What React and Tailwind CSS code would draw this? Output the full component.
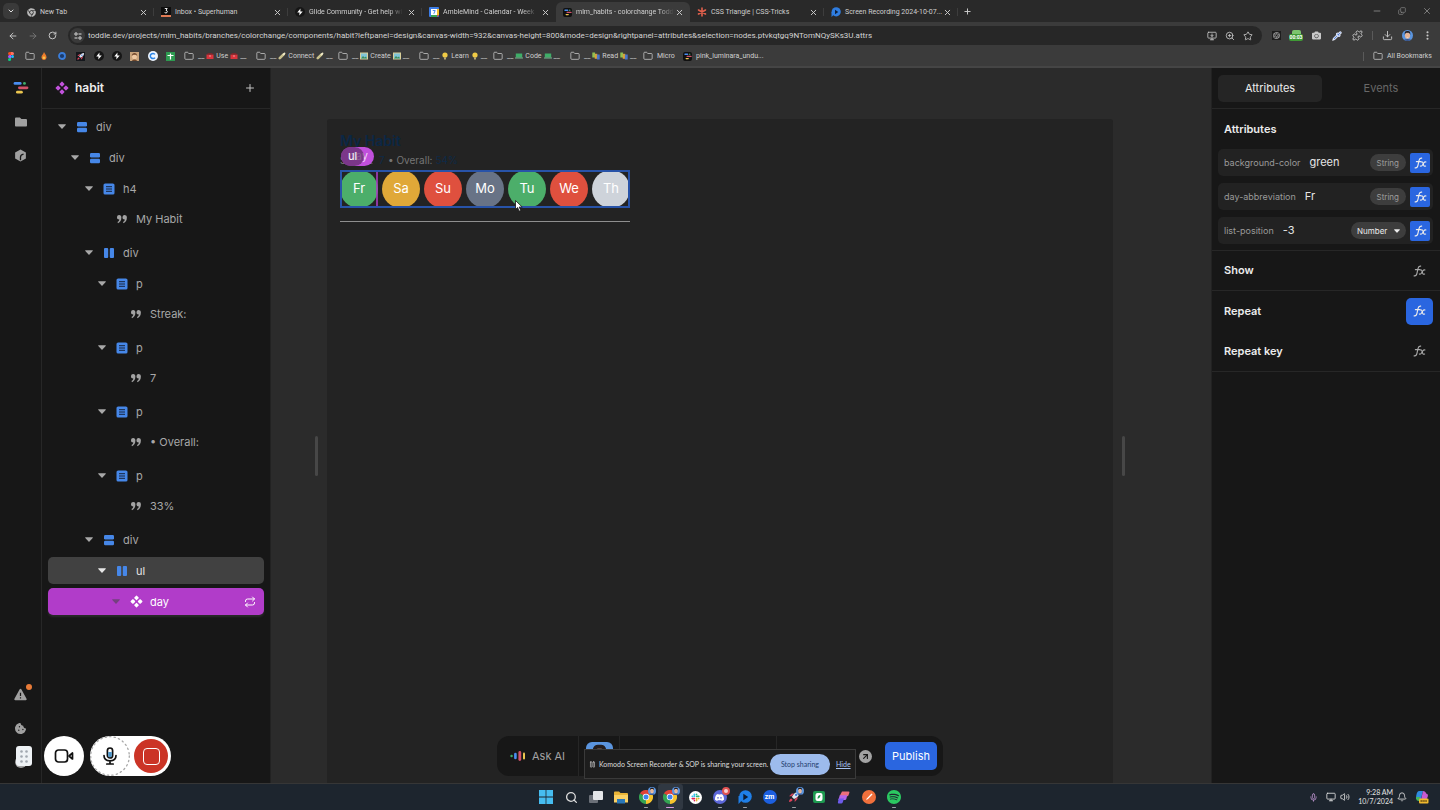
import React from "react";
import {
  ArrowLeft, ArrowRight, Bell, ChevronDown, Copy, Download, EllipsisVertical, Folder, Minus,
  MonitorDown, Pause, Pipette, Plus, Puzzle, Repeat, RotateCw, Search, Star, Volume2, X, ZoomIn,
  ArrowUpRight, Mic, Monitor,
} from "lucide-react";
import { SiDiscord, SiSpotify, SiOpenai } from "react-icons/si";
import { FaCamera, FaChrome, FaCookieBite, FaFolder } from "react-icons/fa";

/* ---------- small drawings ---------- */

function ToddleMark({ className }) {
  return (
    <svg className={className} viewBox="0 0 16 14" fill="none" strokeLinecap="round" strokeWidth="2.8">
      <path d="M2 2.4h5.2" stroke="#4a8df0" />
      <path d="M11.4 2.4h.1" stroke="#3fae6a" />
      <path d="M6.4 6.8h7.6" stroke="#d2526a" />
      <path d="M4.4 11.2h4" stroke="#ecc64f" />
    </svg>
  );
}

function ToddleFavicon() {
  return (
    <span className="flex size-[9px] shrink-0 items-center justify-center rounded-[2px] bg-[#101010]">
      <ToddleMark className="h-[7px] w-[8px]" />
    </span>
  );
}

function GlideIcon() {
  return (
    <svg className="size-[10px] shrink-0" viewBox="0 0 20 20">
      <circle cx="10" cy="10" r="10" fill="#161616" />
      <path d="M11 3 4.5 11h4.6L8.5 17l7-8h-4.8z" fill="#fff" />
    </svg>
  );
}

function FigmaIcon() {
  return (
    <svg className="h-[9px] w-[6px] shrink-0" viewBox="0 0 12 18">
      <path d="M3 0h3v6H3a3 3 0 0 1 0-6z" fill="#f24e1e" />
      <path d="M6 0h3a3 3 0 0 1 0 6H6z" fill="#ff7262" />
      <path d="M3 6h3v6H3a3 3 0 0 1 0-6z" fill="#a259ff" />
      <circle cx="9" cy="9" r="3" fill="#1abcfe" />
      <path d="M3 12h3v3a3 3 0 1 1-3-3z" fill="#0acf83" />
    </svg>
  );
}

function Fx({ className }) {
  return (
    <svg className={className} viewBox="0 0 24 22" fill="none" stroke="currentColor" strokeWidth="2.1" strokeLinecap="round" strokeLinejoin="round">
      <path d="M2 20c3.500.7 4.600-1.200 5.300-4.600l1.900-8.800C9.900 3.300 11 1.400 14.200 2" />
      <path d="M4.400 8.400h8" />
      <path d="M13.500 9.200c2-.8 2.700.2 3.300 2.400l.8 3c.5 2 1.600 3 3.800 1.900" />
      <path d="M22 9.200c-1.500-.9-2.500-.2-3.600 1.200l-2.600 4.200c-1 1.600-2.200 2.700-4 1.900" />
    </svg>
  );
}

function Diamonds({ className }) {
  return (
    <svg className={className} viewBox="0 0 24 24" fill="currentColor">
      <rect x="8.700" y="2" width="6.600" height="6.600" rx="1" transform="rotate(45 12 5.300)" />
      <rect x="8.700" y="15.400" width="6.600" height="6.600" rx="1" transform="rotate(45 12 18.700)" />
      <rect x="2" y="8.700" width="6.600" height="6.600" rx="1" transform="rotate(45 5.300 12)" />
      <rect x="15.400" y="8.700" width="6.600" height="6.600" rx="1" transform="rotate(45 18.700 12)" />
    </svg>
  );
}

function NodeIcon({ kind }) {
  if (kind === "rows")
    return (
      <svg className="size-3" viewBox="0 0 12 12" fill="#4687e8">
        <rect x="1" y="1" width="10" height="4.400" rx="1.200" />
        <rect x="1" y="6.800" width="10" height="4.400" rx="1.200" />
      </svg>
    );
  if (kind === "cols")
    return (
      <svg className="size-3" viewBox="0 0 12 12" fill="#4687e8">
        <rect x="1" y="1" width="4.200" height="10" rx="1" />
        <rect x="6.800" y="1" width="4.200" height="10" rx="1" />
      </svg>
    );
  if (kind === "text")
    return (
      <svg className="size-3" viewBox="0 0 12 12">
        <rect x="0.500" y="0.500" width="11" height="11" rx="1.600" fill="#4687e8" />
        <path d="M3 3.700h6M3 6h6M3 8.300h6" stroke="#16243c" strokeWidth="1" />
      </svg>
    );
  if (kind === "quote")
    return (
      <svg className="size-3" viewBox="0 0 12 12" fill="#a3a3a3">
        <path d="M1 4a2.100 2.100 0 1 1 4.400.3C5.400 7.500 4.200 9.300 2 10.200l-.5-1.100c1.100-.6 1.700-1.400 1.800-2.600A2.300 2.300 0 0 1 1 4z" />
        <path d="M6.500 4a2.100 2.100 0 1 1 4.400.3c0 3.200-1.200 5-3.400 5.900L7 9.100c1.100-.6 1.700-1.400 1.800-2.600A2.300 2.300 0 0 1 6.500 4z" />
      </svg>
    );
  return <Diamonds className="size-[13px] text-white" />;
}

function Caret({ className }) {
  return (
    <svg className={className} viewBox="0 0 8 5" fill="currentColor">
      <path d="M.7.200h6.600c.5 0 .7.500.4.800L4.500 4.500c-.3.300-.7.300-1 0L.3 1C0 .7.200.200.700.200z" />
    </svg>
  );
}

function Face({ className }) {
  return (
    <svg className={className} viewBox="0 0 20 20">
      <rect width="20" height="20" fill="#5b95df" />
      <path d="M2 20c1-5 15-5 16 0z" fill="#39558c" />
      <ellipse cx="10" cy="10" rx="4.600" ry="6" fill="#e6b598" />
      <path d="M5 9c-.6-6 1.500-7 5-7s5.600 1 5 7c-.8-3-1.500-4-5-4s-4.200 1-5 4z" fill="#231d1e" />
      <path d="M8 13c1 1.200 3 1.200 4 0z" fill="#fff" />
    </svg>
  );
}

function ChromeBall({ className }) {
  return (
    <svg className={className} viewBox="0 0 24 24">
      <path d="M12 12 1.600 6A12 12 0 0 1 22.400 6z" fill="#e04236" />
      <path d="M12 12 22.400 6A12 12 0 0 1 12 24z" fill="#f7c52d" />
      <path d="M12 12v12A12 12 0 0 1 1.600 6z" fill="#34a352" />
      <circle cx="12" cy="12" r="5.600" fill="#fff" />
      <circle cx="12" cy="12" r="4.300" fill="#3f83ee" />
    </svg>
  );
}

function RocketDrawing({ className }) {
  return (
    <svg className={className} viewBox="0 0 20 20">
      <path d="M18 2c-5 0-9 3-11 8l3 3c5-2 8-6 8-11z" fill="#dfe4ee" />
      <path d="M7 9H3l4-4h3zM11 13v4l4-4v-3z" fill="#d6455b" />
      <circle cx="13" cy="7" r="1.600" fill="#3b78d8" />
      <path d="M6 12c-2 .5-3 2.500-3 5 2.500 0 4.500-1 5-3z" fill="#e2445c" />
    </svg>
  );
}

/* ---------- browser chrome ---------- */

const TABS = [
  { title: "New Tab", icon: <FaChrome className="size-[9px] shrink-0 text-[#b9b9b9]" /> },
  {
    title: "Inbox • Superhuman",
    icon: (
      <svg className="size-[10px] shrink-0" viewBox="0 0 10 10">
        <rect width="10" height="10" fill="#0d0d0d" />
        <rect y="8" width="10" height="2" fill="#e07a54" />
        <path d="M3.800 1.500h2.400L5 3.300c1.800.1 1.700 2.700-.1 2.700-.7 0-1.100-.3-1.300-.8" fill="none" stroke="#fff" strokeWidth=".9" />
      </svg>
    ),
  },
  { title: "Glide Community - Get help wi", icon: <GlideIcon />, fade: true },
  {
    title: "AmbleMind - Calendar - Week",
    icon: (
      <svg className="size-[10px] shrink-0" viewBox="0 0 10 10">
        <rect width="10" height="10" rx="1" fill="#3c7de6" />
        <path d="M8 2h2v6H8z" fill="#f5bd2c" />
        <path d="M2 8h6v2H2z" fill="#37a454" />
        <path d="M8 8h2L8 10z" fill="#e24939" />
        <rect x="2" y="2" width="6" height="6" fill="#fff" />
        <path d="M3.700 3.500h2.500L4.800 6.800" fill="none" stroke="#3c7de6" strokeWidth=".9" />
      </svg>
    ),
    fade: true,
  },
  { title: "mlm_habits - colorchange Todd", icon: <ToddleFavicon />, fade: true, active: true },
  {
    title: "CSS Triangle | CSS-Tricks",
    icon: (
      <svg className="size-[10px] shrink-0" viewBox="0 0 10 10" stroke="#e2604c" strokeWidth="1.600" strokeLinecap="round">
        <path d="M5 1v8M1.500 3l7 4M8.500 3l-7 4" />
      </svg>
    ),
  },
  {
    title: "Screen Recording 2024-10-07...",
    icon: (
      <svg className="size-[10px] shrink-0" viewBox="0 0 10 10">
        <circle cx="5.200" cy="4.800" r="4.600" fill="#2f7de0" />
        <path d="M.5 10V5h5z" fill="#2f7de0" />
        <path d="M4 2.800 7.300 5 4 7.200z" fill="#0d1f3b" />
      </svg>
    ),
  },
];

function TabStrip() {
  return (
    <div className="flex h-[22px] items-center bg-[#292929] pl-[3px]">
      <button aria-label="Search tabs" className="flex size-4 items-center justify-center rounded-[5px] bg-[#3a3a3a] text-[#ddd]">
        <ChevronDown className="size-2" strokeWidth={3} />
      </button>
      <div role="tablist" className="flex h-full items-center pl-px">
        {TABS.map((t, i) => (
          <div
            key={t.title}
            className={
              t.active
                ? "flex h-5 w-[134px] items-center self-end rounded-t-md bg-[#3b3b3b] pl-[7px]"
                : "flex h-5 w-[134px] items-center self-end pl-[7px]"
            }
          >
            <button role="tab" aria-selected={!!t.active} className="flex min-w-0 flex-1 items-center gap-1">
              {t.icon}
              <span
                className={
                  t.fade
                    ? "flex-1 mask-r-from-85% text-left whitespace-nowrap"
                    : "flex-1 text-left whitespace-nowrap"
                }
              >
                {t.title}
              </span>
            </button>
            <button aria-label={"Close " + t.title} className="ml-[2px] flex w-3 justify-center">
              <X className="size-[9px]" strokeWidth={2.5} />
            </button>
            <span className={i === 3 || i === 4 ? "ml-[4px] w-px" : "ml-[4px] h-2 w-px bg-[#3d3d3d]"} />
          </div>
        ))}
      </div>
      <button aria-label="New tab" className="ml-px flex size-4 items-center justify-center">
        <Plus className="size-[9px]" strokeWidth={2.5} />
      </button>
      <div className="ml-auto flex items-center gap-4 pr-2 text-[#8c8c8c]">
        <button aria-label="Minimize"><Minus className="size-[10px]" /></button>
        <button aria-label="Restore"><Copy className="size-2 -scale-x-100 rotate-180" /></button>
        <button aria-label="Close window"><X className="size-[10px]" /></button>
      </div>
    </div>
  );
}

function AddressBar() {
  return (
    <div className="flex h-6 items-center pt-[3px] text-[#c9c9c9]">
      <div className="flex w-[68px] items-center gap-[10px] pl-2">
        <button aria-label="Back"><ArrowLeft className="size-[10px]" strokeWidth={2.200} /></button>
        <button aria-label="Forward"><ArrowRight className="size-[10px] text-[#777]" strokeWidth={2.200} /></button>
        <button aria-label="Reload"><RotateCw className="size-[9px]" strokeWidth={2.600} /></button>
      </div>
      <div className="flex h-[19px] flex-1 items-center rounded-full bg-[#272727] pr-[9px] pl-[2px]">
        <button aria-label="Site information" className="flex size-[15px] items-center justify-center rounded-full bg-[#3a3a3a]">
          <svg className="size-2" viewBox="0 0 8 8" fill="none" stroke="#ddd" strokeWidth="1">
            <path d="M4.500 2h3M.5 6h3" />
            <circle cx="2" cy="2" r="1.200" />
            <circle cx="6" cy="6" r="1.200" />
          </svg>
        </button>
        <input
          aria-label="Address"
          className="ml-[3px] min-w-0 flex-1 bg-transparent text-[8px] text-[#d4d4d4] outline-none"
          defaultValue="toddle.dev/projects/mlm_habits/branches/colorchange/components/habit?leftpanel=design&canvas-width=932&canvas-height=800&mode=design&rightpanel=attributes&selection=nodes.ptvkqtgq9NTomNQySKs3U.attrs"
        />
        <div className="flex items-center gap-2">
          <button aria-label="Install app"><MonitorDown className="size-[10px]" /></button>
          <button aria-label="Zoom"><ZoomIn className="size-[10px]" /></button>
          <button aria-label="Bookmark"><Star className="size-[10px]" /></button>
        </div>
      </div>
      <div className="flex items-center pl-1">
        <button aria-label="Assistant" className="flex w-5 justify-center">
          <span className="flex size-[9px] items-center justify-center bg-[#1d1d1d]"><SiOpenai className="size-[7px]" /></span>
        </button>
        <button aria-label="Recording time" className="flex w-5 flex-col items-center">
          <span className="h-1 w-[9px] rounded-t-[2px] bg-[#7cc46d]" />
          <span className="rounded-[2px] bg-[#3f9a35] px-[1px] text-[5px] leading-[7px] font-bold text-white">00:03</span>
        </button>
        <button aria-label="Screenshot" className="flex w-[21px] justify-center"><FaCamera className="size-[9px]" /></button>
        <button aria-label="Color picker" className="flex w-5 justify-center"><Pipette className="size-[10px] fill-[#4d7bd8] text-[#e9eefb]" strokeWidth={2.500} /></button>
        <button aria-label="Extensions" className="flex w-[21px] justify-center"><Puzzle className="size-[11px]" /></button>
        <span className="mx-[4px] h-[9px] w-px bg-[#5a5a5a]" />
        <button aria-label="Downloads" className="flex w-5 justify-center"><Download className="size-[11px]" /></button>
        <button aria-label="Profile" className="flex w-5 justify-center"><Face className="size-[11px] rounded-full" /></button>
        <button aria-label="Menu" className="flex w-5 justify-center"><EllipsisVertical className="size-[11px]" strokeWidth={2.500} /></button>
        <span className="w-[3px]" />
      </div>
    </div>
  );
}

function Emoji({ kind }) {
  if (kind === "box")
    return (
      <svg className="size-2 shrink-0" viewBox="0 0 8 8">
        <path d="M.5 2.500h7V7h-7z" fill="#d8343c" />
        <path d="M.5 2.500 2 1.200h4l1.500 1.300z" fill="#8f2228" />
        <path d="M3 4h2" stroke="#f1b6b6" strokeWidth=".8" />
      </svg>
    );
  if (kind === "plug")
    return (
      <svg className="size-2 shrink-0" viewBox="0 0 8 8" strokeLinecap="round">
        <path d="M1.800 6.200 5.600 2.400" stroke="#c8c08d" strokeWidth="2.600" />
        <path d="M5.400 2.600 6.600 1.400" stroke="#efe9c8" strokeWidth="1.600" />
      </svg>
    );
  if (kind === "picture")
    return (
      <svg className="size-2 shrink-0" viewBox="0 0 8 8">
        <rect y=".5" width="8" height="7" fill="#d9cf9a" />
        <rect x="1" y="1.500" width="6" height="5" fill="#7fc4d8" />
        <path d="M1 6.500 3 4l1.500 1.500L6 4.500l1 2z" fill="#3b8d5c" />
      </svg>
    );
  if (kind === "bulb")
    return (
      <svg className="size-2 shrink-0" viewBox="0 0 8 8">
        <circle cx="4" cy="3" r="2.600" fill="#f0cb45" />
        <rect x="3" y="5.300" width="2" height="2.200" fill="#b8aa74" />
      </svg>
    );
  if (kind === "laptop")
    return (
      <svg className="size-2 shrink-0" viewBox="0 0 8 8">
        <rect x=".8" y="1.500" width="6.400" height="4" fill="#3fae68" />
        <rect y="5.500" width="8" height="1" fill="#7bb591" />
      </svg>
    );
  return (
    <svg className="size-2 shrink-0" viewBox="0 0 8 8">
      <rect x=".3" y=".5" width="2.800" height="5" fill="#8fc152" />
      <rect x="2.700" y="1.800" width="2.600" height="5" fill="#d8a13c" />
      <rect x="4.900" y="2.500" width="2.800" height="5" fill="#4a74c8" />
    </svg>
  );
}

const FOLDERS = [
  { title: "Use", kind: "box", width: "w-[72px]" },
  { title: "Connect", kind: "plug", width: "w-[82px]" },
  { title: "Create", kind: "picture", width: "w-[81px]" },
  { title: "Learn", kind: "bulb", width: "w-[74px]" },
  { title: "Code", kind: "laptop", width: "w-[77px]" },
  { title: "Read", kind: "books", width: "w-[73px]" },
];

function Bookmarks() {
  return (
    <div className="flex h-5 items-center overflow-hidden pl-[8px] text-[7px] whitespace-nowrap text-[#cfcfcf]">
      <div className="flex w-[176px] shrink-0 items-center">
        <a href="#" aria-label="Figma" className="flex w-[17px]"><FigmaIcon /></a>
        <a href="#" aria-label="Flame" className="flex w-[33px] items-center gap-[5px]">
          <Folder className="size-[10px]" strokeWidth={1.800} />
          <svg className="size-2" viewBox="0 0 8 8">
            <path d="M4 0c.3 1.500 2.500 2.600 2.500 5A2.500 2.700 0 0 1 4 8a2.500 2.700 0 0 1-2.500-3C1.500 3.500 3.500 2 4 0z" fill="#ee7c2b" />
            <circle cx="4" cy="5.800" r="1.300" fill="#f8c64e" />
          </svg>
        </a>
        <a href="#" aria-label="Ring" className="flex w-[18px]">
          <svg className="size-2" viewBox="0 0 8 8">
            <circle cx="4" cy="4" r="3" fill="#1c3b6b" stroke="#3a7edb" strokeWidth="1.800" />
          </svg>
        </a>
        <a href="#" aria-label="Rocket" className="flex w-[18px]">
          <span className="bg-[#14171c]"><RocketDrawing className="size-[9px]" /></span>
        </a>
        <a href="#" aria-label="Glide" className="flex w-[18px]"><GlideIcon /></a>
        <a href="#" aria-label="Glide docs" className="flex w-[18px]"><GlideIcon /></a>
        <a href="#" aria-label="Portrait" className="flex w-[18px]">
          <svg className="size-[9px]" viewBox="0 0 9 9">
            <rect width="9" height="9" fill="#c9a47c" />
            <ellipse cx="4.500" cy="4.500" rx="2.400" ry="3" fill="#efc9a2" />
            <path d="M1.800 4c0-4 5.400-4 5.400 0C6 2.400 3 2.400 1.800 4zM2 9c.5-2 4.500-2 5 0z" fill="#6d4429" />
          </svg>
        </a>
        <a href="#" aria-label="Calendar app" className="flex w-[18px]">
          <svg className="size-[10px]" viewBox="0 0 10 10">
            <circle cx="5" cy="5" r="5" fill="#eef5ff" />
            <path d="M7 3.400A2.600 2.600 0 1 0 7 6.600" fill="none" stroke="#2c86e8" strokeWidth="1.500" />
          </svg>
        </a>
        <a href="#" aria-label="Sheet" className="flex">
          <svg className="size-[9px]" viewBox="0 0 9 9">
            <rect width="9" height="9" fill="#2d9a50" />
            <path d="M1.500 3.500h6M4.500 1.500v6" stroke="#fff" strokeWidth="1.200" />
          </svg>
        </a>
      </div>
      {FOLDERS.map((f) => (
        <a key={f.title} href="#" className={f.width + " flex shrink-0 items-center gap-[2px]"}>
          <Folder className="size-[10px] shrink-0" strokeWidth={1.800} />
          <span className="pl-[2px]">__</span>
          <Emoji kind={f.kind} />
          <span>{f.title}</span>
          <Emoji kind={f.kind} />
          <span>__</span>
        </a>
      ))}
      <a href="#" className="flex w-[40px] shrink-0 items-center gap-1">
        <Folder className="size-[10px] shrink-0" strokeWidth={1.800} />
        Micro
      </a>
      <a href="#" className="flex shrink-0 items-center gap-1">
        <ToddleFavicon />
        pink_luminara_undu...
      </a>
      <div className="ml-auto flex shrink-0 items-center pr-2">
        <span className="mr-[9px] h-[9px] w-px bg-[#5a5a5a]" />
        <a href="#" className="flex items-center gap-1">
          <Folder className="size-[10px]" strokeWidth={1.800} />
          All Bookmarks
        </a>
      </div>
    </div>
  );
}

/* ---------- editor: left ---------- */

function Rail() {
  return (
    <nav aria-label="Project" className="relative flex w-[42px] shrink-0 flex-col items-center border-r border-[#272727] bg-[#171717] pt-[13px] text-[#a0a0a0]">
      <button aria-label="Home"><ToddleMark className="h-[14px] w-4" /></button>
      <button aria-label="Files" className="mt-[21px]"><FaFolder className="size-3" /></button>
      <button aria-label="Packages" className="mt-[21px]">
        <svg className="size-[13px]" viewBox="0 0 14 14">
          <path d="M7 0.500 12.800 3.700v6.600L7 13.500 1.200 10.300V3.700z" fill="currentColor" />
          <path d="M7 12V8.500c0-1.500 1-2.600 3.300-3" stroke="#171717" strokeWidth="1.400" fill="none" />
        </svg>
      </button>
      <div className="mt-auto flex flex-col items-center gap-[22px] pb-[15px]">
        <button aria-label="Issues" className="relative">
          <svg className="size-[13px]" viewBox="0 0 14 14">
            <path d="M7 .8c.4 0 .7.2.9.6l5.600 10.200c.4.800 0 1.600-.9 1.600H1.400c-.9 0-1.300-.8-.9-1.600L6.100 1.400c.2-.4.500-.6.900-.6z" fill="currentColor" />
            <path d="M7 5v3.600M7 10v1.300" stroke="#171717" strokeWidth="1.300" />
          </svg>
          <span className="absolute -top-1 -right-[5px] size-[6px] rounded-full bg-[#e87b38]" />
        </button>
        <button aria-label="Cookies"><FaCookieBite className="size-[11px]" /></button>
        <button aria-label="Help" className="size-3 rounded-full bg-[#a0a0a0]" />
      </div>
    </nav>
  );
}

const INDENT = ["pl-[9px]", "pl-[22px]", "pl-[36px]", "pl-[49px]", "pl-[63px]"];

const NODES = [
  { level: 0, kind: "rows", label: "div" },
  { level: 1, kind: "rows", label: "div" },
  { level: 2, kind: "text", label: "h4" },
  { level: 3, kind: "quote", label: "My Habit" },
  { level: 2, kind: "cols", label: "div" },
  { level: 3, kind: "text", label: "p" },
  { level: 4, kind: "quote", label: "Streak:" },
  { level: 3, kind: "text", label: "p" },
  { level: 4, kind: "quote", label: "7" },
  { level: 3, kind: "text", label: "p" },
  { level: 4, kind: "quote", label: "• Overall:" },
  { level: 3, kind: "text", label: "p" },
  { level: 4, kind: "quote", label: "33%" },
  { level: 2, kind: "rows", label: "div" },
  { level: 3, kind: "cols", label: "ul", tone: "hover" },
  { level: 4, kind: "component", label: "day", tone: "selected" },
];

const ROW_TONE = {
  plain: "flex h-[27px] w-full items-center rounded-[5px] text-[#a8a8a8] ",
  quote: "mb-1 flex h-[25px] w-full items-center rounded-[5px] text-[#a8a8a8] ",
  hover: "flex h-[27px] w-full items-center rounded-[5px] bg-[#414141] text-[#e6e6e6] ",
  selected: "flex h-[27px] w-full items-center rounded-[5px] bg-[#b13cc9] text-white shadow-[0_2px_2px_#2a2a2a] ",
};

function Tree() {
  return (
    <aside className="flex w-[229px] shrink-0 flex-col border-r border-[#222] bg-[#171717]">
      <header className="flex h-[41px] items-center border-b border-[#272727] pr-[14px] pl-[13px]">
        <Diamonds className="size-[14px] text-[#c252dc]" />
        <h1 className="ml-[6px] text-[12px] font-semibold text-[#ececec]">habit</h1>
        <button aria-label="Add element" className="ml-auto text-[#c4c4c4]">
          <Plus className="size-3" strokeWidth={2} />
        </button>
      </header>
      <div className="flex flex-col gap-1 pt-1 pr-[6px] pl-[6px]">
        {NODES.map((n, i) => (
          <button key={i} className={ROW_TONE[n.tone || (n.kind === "quote" ? "quote" : "plain")] + INDENT[n.level]}>
            <span className="flex w-[19px] shrink-0 items-center pl-[1px]">
              {n.kind !== "quote" && (
                <Caret className={n.tone === "selected" ? "h-[5px] w-2 text-[#74407f]" : "h-[5px] w-2"} />
              )}
            </span>
            <span className="flex w-5 shrink-0"><NodeIcon kind={n.kind} /></span>
            <span className="text-[11px] leading-4">{n.label}</span>
            {n.tone === "selected" && <Repeat className="mr-2 ml-auto size-3" strokeWidth={2} />}
          </button>
        ))}
      </div>
    </aside>
  );
}

/* ---------- editor: canvas ---------- */

const DAYS = [
  { label: "Fr", color: "bg-[#4cae6a]" },
  { label: "Sa", color: "bg-[#e0a838]" },
  { label: "Su", color: "bg-[#df503e]" },
  { label: "Mo", color: "bg-[#687386]" },
  { label: "Tu", color: "bg-[#4cae6a]" },
  { label: "We", color: "bg-[#df503e]" },
  { label: "Th", color: "bg-[#ced3da]" },
];

function Stage() {
  return (
    <main className="relative flex min-w-0 flex-1 flex-col bg-[#2b2b2b] pt-[51px]">
      <div className="flex flex-1 items-center gap-[9px] pr-[86px] pl-[44px]">
        <div className="mt-[10px] h-10 w-[3px] shrink-0 rounded-full bg-[#474747]" />
        <section className="min-w-0 flex-1 self-stretch rounded-t-[3px] bg-[#232323] px-[13px] pt-[12px]">
          <div className="relative w-[290px]">
            <h4 className="text-[14px] leading-5 font-semibold text-[#0b2745]">My Habit</h4>
            <div className="flex h-[18px] items-center gap-[3px] text-[10px] text-[#757575]">
              <p className="w-[36px]">Streak:</p>
              <p className="w-[6px] text-[#0e2a47]">7</p>
              <p>• Overall:</p>
              <p className="text-[#0e2a47]">54%</p>
            </div>
            <ul className="mt-px flex h-[38px] items-center justify-between text-[13px] text-white">
              {DAYS.map((d) => (
                <li key={d.label} className={d.color + " flex size-[38px] items-center justify-center rounded-full"}>
                  {d.label}
                </li>
              ))}
            </ul>
            <div className="mt-[13px] h-px bg-[#8f8f8f]" />
            <span className="absolute top-[39px] left-[36px] h-[38px] w-[2px] bg-[#a83fc2]/80" />
            <span className="absolute top-[39px] left-0 h-[38px] w-full border-2 border-[#2853a8]" />
            <span className="absolute top-4 left-[1px] flex h-[19px] w-[33px] items-center justify-end rounded-full bg-[#c150dc] pr-[6px] text-[11px] text-[#f0d5f6]">day</span>
            <span className="absolute top-4 left-[1px] flex h-[19px] w-[23px] items-center justify-center rounded-full bg-[#5d2c66]/70 text-[11px] text-white">ul</span>
            <svg className="absolute top-[69px] left-[175px] h-[12px] w-[8px]" viewBox="0 0 8 12">
              <path d="M.5.500v9l2.100-2 1.500 3.700 1.700-.7-1.600-3.500h3z" fill="#fff" stroke="#111" strokeWidth=".8" />
            </svg>
          </div>
        </section>
        <div className="mt-[10px] h-10 w-[3px] shrink-0 rounded-full bg-[#474747]" />
      </div>

      <div className="absolute bottom-[7px] left-1/2 flex h-10 w-[446px] -translate-x-[244px] items-center rounded-xl bg-[#171717]">
        <button className="flex h-full w-[81px] items-center gap-[6px] pl-[13px] text-[11px] text-[#a3a3a3]">
          <svg className="h-3 w-4" viewBox="0 0 16 12" strokeLinecap="round" fill="none">
            <path d="M1.500 6h.1" stroke="#3fae6a" strokeWidth="2.400" />
            <path d="M5.400 4v4" stroke="#4a8df0" strokeWidth="2.600" />
            <path d="M9.800 2.400v7.200" stroke="#d2526a" strokeWidth="2.800" />
            <path d="M14 3.500v5" stroke="#ecc64f" strokeWidth="2" />
          </svg>
          Ask AI
        </button>
        <div className="flex h-full w-[42px] items-start justify-center border-x border-[#262626] pt-[6px]">
          <button aria-label="Collaborator"><Face className="size-[27px] rounded-md" /></button>
        </div>
        <div className="h-full w-[157px] border-r border-[#262626]" />
        <button aria-label="Open preview" className="ml-[82px] flex size-[13px] items-center justify-center rounded-full bg-[#a3a3a3] text-[#171717]">
          <ArrowUpRight className="size-[9px]" strokeWidth={3} />
        </button>
        <button className="mr-[6px] ml-auto h-7 w-[52px] rounded-[5px] bg-[#2a66e0] text-[11px] text-white">Publish</button>
      </div>

      <div className="absolute bottom-1 left-1/2 flex h-[30px] w-[272px] -translate-x-[157px] items-center border border-[#3a3a3a] bg-[#1d1d1d] pl-1 font-['Lato','Noto_Sans',sans-serif] text-[7px] text-[#dedede]">
        <Pause className="size-[7px]" />
        <span className="ml-[3px] w-[171px] whitespace-nowrap">Komodo Screen Recorder &amp; SOP is sharing your screen.</span>
        <button className="h-[21px] w-[60px] rounded-full bg-[#9dbbec] text-[#24406e]">Stop sharing</button>
        <a href="#" className="ml-[6px] text-[#a8c4f4] underline">Hide</a>
      </div>
    </main>
  );
}

/* ---------- editor: right ---------- */

const ATTRIBUTES = [
  { name: "background-color", value: "green", type: "String" },
  { name: "day-abbreviation", value: "Fr", type: "String" },
  { name: "list-position", value: "-3", type: "Number" },
];

function Inspector() {
  return (
    <aside className="w-[229px] shrink-0 border-l border-[#222] bg-[#171717] text-[11px] text-[#ececec]">
      <div role="tablist" className="flex h-[41px] items-center border-b border-[#272727] pr-[7px] pl-[6px]">
        <button role="tab" aria-selected="true" className="h-[27px] flex-1 rounded-[5px] bg-[#252525]">Attributes</button>
        <button role="tab" aria-selected="false" className="ml-[7px] h-[27px] flex-1 text-[#686868]">Events</button>
      </div>
      <section className="border-b border-[#272727] pr-[7px] pb-[6px] pl-[6px]">
        <h2 className="flex h-10 items-center pl-[6px] font-semibold">Attributes</h2>
        <div className="flex flex-col gap-[7px]">
          {ATTRIBUTES.map((a) => (
            <div key={a.name} className="flex h-[27px] items-center rounded-[5px] bg-[#222] pr-[3px] pl-[6px]">
              <label htmlFor={a.name} className="pt-px text-[9px] whitespace-nowrap text-[#9a9a9a]">{a.name}</label>
              <input id={a.name} defaultValue={a.value} className="ml-[9px] w-0 min-w-0 flex-1 bg-transparent text-[#e6e6e6] outline-none" />
              {a.type === "Number" ? (
                <span className="relative flex items-center">
                  <select aria-label="Type" className="h-[17px] w-[55px] appearance-none rounded-full bg-[#3d3d3d] pl-[6px] text-[8px] text-[#ececec]">
                    <option>Number</option>
                  </select>
                  <Caret className="pointer-events-none absolute right-[6px] h-1 w-[6px]" />
                </span>
              ) : (
                <span className="flex h-[17px] items-center rounded-full bg-[#3d3d3d] px-[7px] text-[8px] text-[#9d9d9d]">{a.type}</span>
              )}
              <button aria-label={"Formula for " + a.name} className="ml-1 flex size-[20px] items-center justify-center rounded-[2px] bg-[#2a66e0]">
                <Fx className="h-3 w-[13px]" />
              </button>
            </div>
          ))}
        </div>
      </section>
      <section className="flex h-10 items-center border-b border-[#272727] pr-[7px] pl-3">
        <h2 className="font-semibold">Show</h2>
        <button aria-label="Show formula" className="ml-auto flex size-[27px] items-center justify-center text-[#a8a8a8]"><Fx className="h-3 w-[13px]" /></button>
      </section>
      <section className="border-b border-[#272727] pr-[7px] pl-3">
        <div className="flex h-10 items-center">
          <h2 className="font-semibold">Repeat</h2>
          <button aria-label="Repeat formula" className="ml-auto flex size-[27px] items-center justify-center rounded-[5px] bg-[#2a66e0]"><Fx className="h-3 w-[13px]" /></button>
        </div>
        <div className="flex h-10 items-center">
          <h2 className="font-semibold">Repeat key</h2>
          <button aria-label="Repeat key formula" className="ml-auto flex size-[27px] items-center justify-center text-[#a8a8a8]"><Fx className="h-3 w-[13px]" /></button>
        </div>
      </section>
    </aside>
  );
}

/* ---------- recorder overlay ---------- */

function Recorder() {
  return (
    <div className="absolute bottom-[7px] left-4 flex items-center">
      <button aria-label="Drag handle" className="flex h-5 w-4 items-center justify-center rounded-[3px] bg-[#eef2f5]">
        <svg className="h-[15px] w-[10px]" viewBox="0 0 10 15" fill="#a0a7af">
          <circle cx="2.500" cy="2.500" r="1.300" /><circle cx="7.500" cy="2.500" r="1.300" />
          <circle cx="2.500" cy="7.500" r="1.300" /><circle cx="7.500" cy="7.500" r="1.300" />
          <circle cx="2.500" cy="12.500" r="1.300" /><circle cx="7.500" cy="12.500" r="1.300" />
        </svg>
      </button>
      <button aria-label="Camera" className="ml-3 flex size-10 items-center justify-center rounded-full bg-white">
        <svg className="h-[14px] w-5" viewBox="0 0 20 14" fill="none" stroke="#111" strokeWidth="1.700" strokeLinejoin="round">
          <rect x="1.500" y="1" width="12" height="12" rx="3" />
          <path d="m15 7 3.500-3v6z" />
        </svg>
      </button>
      <div className="ml-[6px] flex h-10 w-[81px] items-center justify-between rounded-full bg-white pr-[3px]">
        <button aria-label="Microphone" className="relative flex size-10 items-center justify-center rounded-full">
          <svg className="absolute inset-0 size-10" viewBox="0 0 40 40" fill="none">
            <circle cx="20" cy="20" r="19.300" stroke="#a8a8a8" strokeWidth="1.300" strokeDasharray="1.300 3.200" strokeLinecap="round" />
          </svg>
          <svg className="h-[18px] w-[14px]" viewBox="0 0 14 18" fill="none" stroke="#111" strokeWidth="1.700" strokeLinecap="round">
            <rect x="4.400" y="1" width="5.200" height="10" rx="2.600" fill="#fff" />
            <path d="M5.200 5h3.600v3.400a1.800 1.800 0 0 1-3.600 0z" fill="#4a94c9" stroke="none" />
            <path d="M1 8.500c0 3.500 2.500 5.300 6 5.300s6-1.800 6-5.300M7 14v2.800M3.800 17h6.400" />
          </svg>
        </button>
        <button aria-label="Stop recording" className="flex size-[34px] items-center justify-center rounded-full bg-[#cb3426]">
          <span className="size-[17px] rounded-[4px] border border-white" />
        </button>
      </div>
    </div>
  );
}

/* ---------- taskbar ---------- */

const PersonBadge = () => <Face className="absolute -top-[3px] -right-[3px] size-[8px] rounded-full" />;

const APPS = [
  {
    name: "Start",
    node: (
      <svg className="size-[14px]" viewBox="0 0 14 14" fill="#46bdf0">
        <path d="M0 0h6.600v6.600H0zM7.400 0H14v6.600H7.400zM0 7.400h6.600V14H0zM7.400 7.400H14V14H7.400z" />
      </svg>
    ),
  },
  { name: "Search", node: <Search className="size-[13px] text-[#dcdcdc]" strokeWidth={2.400} /> },
  {
    name: "Task view",
    node: (
      <svg className="size-[14px]" viewBox="0 0 14 14">
        <rect y="5" width="9" height="8" rx="1" fill="#6b7078" />
        <rect x="4" y="1" width="10" height="9" rx="1" fill="#e4e6e9" />
      </svg>
    ),
  },
  {
    name: "Explorer",
    node: (
      <svg className="size-[14px]" viewBox="0 0 14 14">
        <path d="M0 2.500A1 1 0 0 1 1 1.500h4l1.500 1.500H13a1 1 0 0 1 1 1V12H0z" fill="#e9b437" />
        <path d="M0 5h14v7.500H0z" fill="#fad165" />
        <path d="M3 9h8v4.500H3z" fill="#2b78b8" />
      </svg>
    ),
  },
  { name: "Chrome", node: <><ChromeBall className="size-[14px]" /><PersonBadge /></>, running: true },
  { name: "Chrome work", node: <><ChromeBall className="size-[14px]" /><PersonBadge /></>, active: true },
  {
    name: "Slack",
    node: (
      <svg className="size-[13px]" viewBox="0 0 24 24">
        <circle cx="12" cy="12" r="12" fill="#fff" />
        <g strokeWidth="3" strokeLinecap="round">
          <path d="M10 6v4" stroke="#36c5f0" /><path d="M6 10h1" stroke="#36c5f0" />
          <path d="M14 10h4" stroke="#2eb67d" /><path d="M14 6v.5" stroke="#2eb67d" />
          <path d="M14 14v4" stroke="#ecb22e" /><path d="M18 14h-.5" stroke="#ecb22e" />
          <path d="M6 14h4" stroke="#e01e5a" /><path d="M10 18v-.5" stroke="#e01e5a" />
        </g>
      </svg>
    ),
  },
  {
    name: "Discord",
    node: (
      <>
        <span className="flex size-[14px] items-center justify-center rounded-full bg-[#5c67d8] text-white"><SiDiscord className="size-[9px]" /></span>
        <span className="absolute -top-[3px] -right-[3px] size-[8px] rounded-full border-2 border-[#e05252] bg-[#f7d2d2]" />
      </>
    ),
    running: true,
  },
  {
    name: "Komodo",
    node: (
      <svg className="size-[14px]" viewBox="0 0 14 14">
        <circle cx="7.500" cy="6.500" r="6.300" fill="#1f7fe8" />
        <path d="M.5 14V6H8z" fill="#1f7fe8" />
        <path d="M5.300 3.700 10.200 7l-4.900 3.300z" fill="#0c1c33" />
      </svg>
    ),
    running: true,
  },
  {
    name: "Zoom",
    node: <span className="flex size-[14px] items-center justify-center rounded-full bg-[#1c5fe0] text-[7px] font-bold text-white">zm</span>,
  },
  { name: "Rocket", node: <><RocketDrawing className="size-[14px]" /><PersonBadge /></>, running: true },
  {
    name: "Notes",
    node: (
      <svg className="size-3" viewBox="0 0 12 12">
        <rect width="12" height="12" rx="2" fill="#1e9a50" />
        <rect x="2.500" y="2" width="7" height="8" rx="2" fill="#fff" />
        <path d="M4.500 7.800c0-2.500 1-3.600 3-3.800-.1 2-1 3.200-3 3.800z" fill="#1e9a50" />
      </svg>
    ),
  },
  {
    name: "Designer",
    node: (
      <svg className="size-[13px]" viewBox="0 0 13 13">
        <path d="M5 .500h6.500q1.300 0 .9 1.200l-.9 2.600q-.3.900-1.300.900H2.500z" fill="#ec6f7b" />
        <path d="M2.800 4.200h7.500l-1 3.800q-.3 1-1.300 1H1.300z" fill="#b465e8" />
        <path d="M1.700 7.500h5.300l-1.200 3.800q-.4 1.200-1.600 1.200H1.800q-1.200 0-.9-1.200z" fill="#6d5bea" />
      </svg>
    ),
  },
  {
    name: "Postman",
    node: (
      <svg className="size-[14px]" viewBox="0 0 14 14">
        <circle cx="7" cy="7" r="7" fill="#f0703c" />
        <path d="m4 10.200 1-2L9.500 3.500l1 1L6 9z" fill="#fff" />
      </svg>
    ),
  },
  { name: "Spotify", node: <SiSpotify className="size-[14px] text-[#2bc861]" />, running: true },
];

function Taskbar() {
  return (
    <footer className="grid h-[27px] shrink-0 grid-cols-[1fr_372px_1fr] items-center border-t border-[#363636] bg-[#1d252e]">
      <span />
      <div className="flex h-full">
        {APPS.map((a) => (
          <button
            key={a.name}
            aria-label={a.name}
            className={
              a.active
                ? "relative flex flex-1 items-center justify-center rounded-[3px] bg-[#303842]"
                : "relative flex flex-1 items-center justify-center"
            }
          >
            <span className="relative flex">{a.node}</span>
            {a.running && <span className="absolute bottom-[2px] h-px w-1 rounded-full bg-[#9a9fa5]" />}
            {a.active && <span className="absolute bottom-[2px] h-px w-2 rounded-full bg-[#d79be0]" />}
          </button>
        ))}
      </div>
      <div className="flex items-center justify-end pr-[11px] text-[#e4e4e4]">
        <button aria-label="Microphone in use"><Mic className="size-[9px] text-[#c79bd8]" /></button>
        <button aria-label="Network" className="ml-2"><Monitor className="size-[10px]" /></button>
        <button aria-label="Volume" className="ml-1"><Volume2 className="size-[10px]" /></button>
        <time className="ml-2 text-right font-['Lato','Noto_Sans',sans-serif] text-[7px] leading-[9px]">
          9:28 AM
          <br />
          10/7/2024
        </time>
        <button aria-label="Notifications" className="ml-1"><Bell className="size-[10px]" /></button>
        <button aria-label="Copilot" className="ml-2">
          <svg className="size-[14px]" viewBox="0 0 14 14">
            <path d="M4 1h4L6 9H1c0-4 1-8 3-8z" fill="#2e8be0" />
            <path d="M8 1c3 0 2.500 3 5 3.500C13 8 11.500 10 9 10H6z" fill="#c65bd0" />
            <path d="M1 7h4l-1 4c-2 0-3-1-3-4z" fill="#45b85c" />
            <rect x="4" y="8.500" width="9.500" height="5" rx="1" fill="#f0b82e" />
            <path d="M5.500 11h6.500" stroke="#5b430c" strokeWidth="1.400" strokeDasharray="1.400 .5" />
          </svg>
        </button>
      </div>
    </footer>
  );
}

export default function App() {
  return (
    <div className="flex h-screen flex-col overflow-hidden bg-[#171717] font-['Inter',sans-serif]">
      <div className="shrink-0 border-b-2 border-[#454545] bg-[#3b3b3b] font-['Roboto','Noto_Sans',sans-serif] text-[7px] text-[#cfcfcf]">
        <TabStrip />
        <AddressBar />
        <Bookmarks />
      </div>
      <div className="relative flex min-h-0 flex-1">
        <Rail />
        <Tree />
        <Stage />
        <Inspector />
        <Recorder />
      </div>
      <div className="shrink-0 font-['Roboto','Noto_Sans',sans-serif]">
        <Taskbar />
      </div>
    </div>
  );
}
